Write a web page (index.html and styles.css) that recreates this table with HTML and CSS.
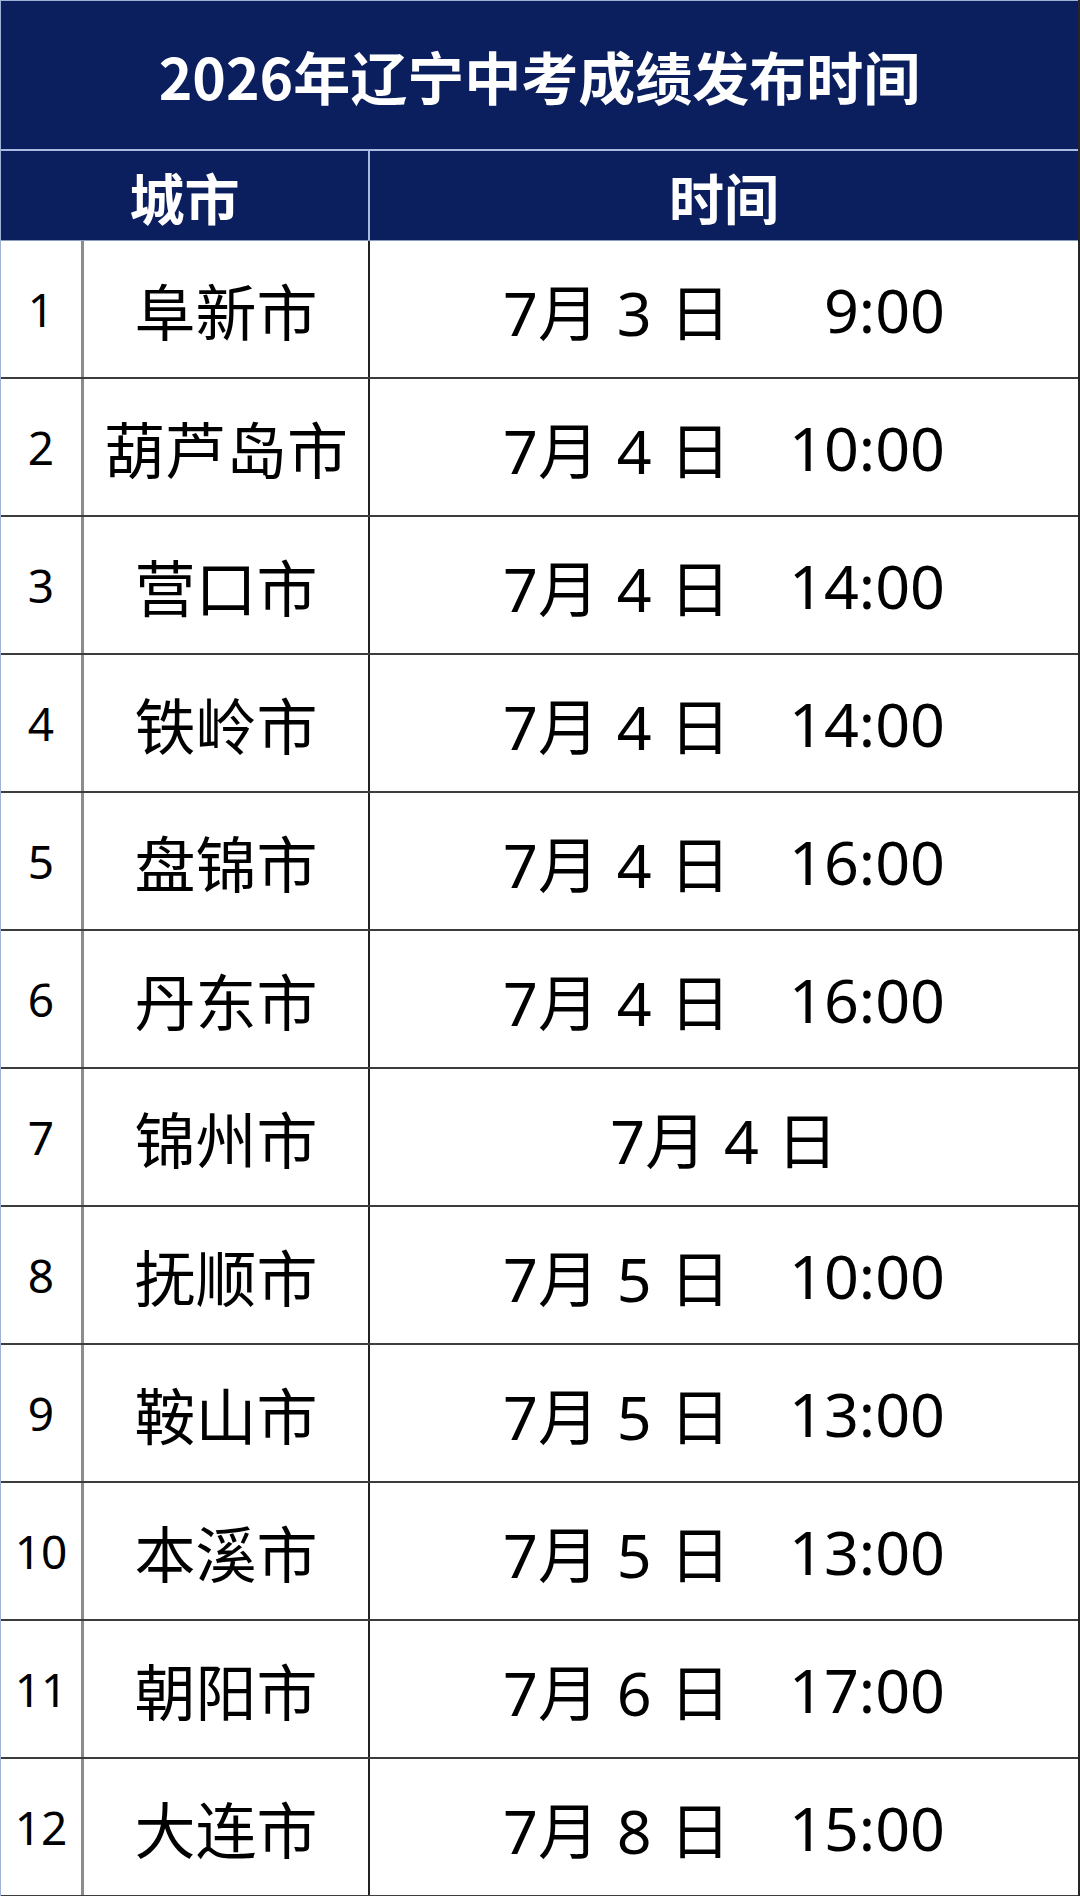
FILE: index.html
```html
<!DOCTYPE html>
<html lang="zh-CN">
<head>
<meta charset="utf-8">
<title>2026年辽宁中考成绩发布时间</title>
<link rel="stylesheet" href="styles.css">
</head>
<body>
<div class="sheet">
  <div class="title">2026年辽宁中考成绩发布时间</div>
  <div class="head">
    <div class="hcell hcity">城市</div>
    <div class="hcell htime">时间</div>
  </div>
  <div class="row"><div class="num">1</div><div class="city">阜新市</div><div class="time"><div class="when"><span class="date">7月 3 日</span><span class="clock">9:00</span></div></div></div>
  <div class="row"><div class="num">2</div><div class="city">葫芦岛市</div><div class="time"><div class="when"><span class="date">7月 4 日</span><span class="clock">10:00</span></div></div></div>
  <div class="row"><div class="num">3</div><div class="city">营口市</div><div class="time"><div class="when"><span class="date">7月 4 日</span><span class="clock">14:00</span></div></div></div>
  <div class="row"><div class="num">4</div><div class="city">铁岭市</div><div class="time"><div class="when"><span class="date">7月 4 日</span><span class="clock">14:00</span></div></div></div>
  <div class="row"><div class="num">5</div><div class="city">盘锦市</div><div class="time"><div class="when"><span class="date">7月 4 日</span><span class="clock">16:00</span></div></div></div>
  <div class="row"><div class="num">6</div><div class="city">丹东市</div><div class="time"><div class="when"><span class="date">7月 4 日</span><span class="clock">16:00</span></div></div></div>
  <div class="row"><div class="num">7</div><div class="city">锦州市</div><div class="time"><div class="when only"><span class="date">7月 4 日</span></div></div></div>
  <div class="row"><div class="num">8</div><div class="city">抚顺市</div><div class="time"><div class="when"><span class="date">7月 5 日</span><span class="clock">10:00</span></div></div></div>
  <div class="row"><div class="num">9</div><div class="city">鞍山市</div><div class="time"><div class="when"><span class="date">7月 5 日</span><span class="clock">13:00</span></div></div></div>
  <div class="row"><div class="num">10</div><div class="city">本溪市</div><div class="time"><div class="when"><span class="date">7月 5 日</span><span class="clock">13:00</span></div></div></div>
  <div class="row"><div class="num">11</div><div class="city">朝阳市</div><div class="time"><div class="when"><span class="date">7月 6 日</span><span class="clock">17:00</span></div></div></div>
  <div class="row"><div class="num">12</div><div class="city">大连市</div><div class="time"><div class="when"><span class="date">7月 8 日</span><span class="clock">15:00</span></div></div></div>
</div>
</body>
</html>
```
FILE: styles.css
```css
html, body {
  margin: 0;
  padding: 0;
  background: #ffffff;
}
body {
  font-family: "Noto Sans", "Noto Sans CJK SC", sans-serif;
  color: #000;
}
.sheet {
  width: 1080px;
  height: 1896px;
  overflow: hidden;
  box-sizing: border-box;
  border-left: 1px solid #9fb1d6;
  border-right: 2px solid #262626;
  display: flex;
  flex-direction: column;
}
.title {
  height: 151px;
  flex: none;
  background: #0b1f5e;
  border-top: 1px solid #9fb1d6;
  box-sizing: border-box;
  border-bottom: 2px solid #a9bbe0;
  color: #fff;
  font-family: "Noto Sans CJK SC", sans-serif;
  font-weight: 700;
  font-size: 57px;
  display: flex;
  align-items: center;
  justify-content: center;
}
.head {
  height: 90px;
  flex: none;
  background: #0b1f5e;
  display: grid;
  grid-template-columns: 369px 1fr;
  box-sizing: border-box;
  border-bottom: 1px solid #8a9bc2;
}
.hcell {
  color: #fff;
  font-weight: 700;
  font-size: 55px;
  display: flex;
  align-items: center;
  justify-content: center;
}
.hcity {
  border-right: 2px solid #a9bbe0;
}
.row {
  height: 138px;
  flex: none;
  display: grid;
  grid-template-columns: 83px 286px 1fr;
  box-sizing: border-box;
  border-bottom: 2px solid #3c3c3c;
}
.num {
  display: flex;
  align-items: center;
  justify-content: center;
  font-size: 46px;
  border-right: 3px solid #8c8c8c;
}
.city {
  display: flex;
  align-items: center;
  justify-content: center;
  font-size: 61px;
  border-right: 2px solid #222;
}
.time {
  display: flex;
  align-items: center;
  justify-content: center;
  font-size: 61px;
}
.when {
  width: 442px;
  display: flex;
  justify-content: space-between;
  align-items: center;
}
.when.only {
  justify-content: center;
}
.date {
  white-space: pre;
  word-spacing: 2px;
}
.clock {
  white-space: pre;
}
```
